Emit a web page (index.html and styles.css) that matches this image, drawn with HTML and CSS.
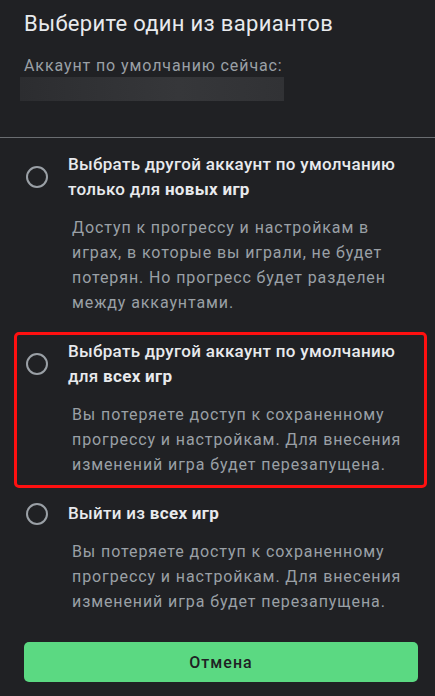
FILE: index.html
```html
<!DOCTYPE html>
<html lang="ru">
<head>
<meta charset="utf-8">
<link rel="stylesheet" href="styles.css">
</head>
<body>
<div class="sheet">
  <header class="head">
    <h1 class="title">Выберите один из вариантов</h1>
    <p class="sub">Аккаунт по умолчанию сейчас:</p>
    <div class="redacted"></div>
  </header>
  <hr class="divider">
  <div class="options">
    <div class="option">
      <span class="radio"></span>
      <div class="opt-title">Выбрать другой аккаунт по умолчанию только для <b>новых игр</b></div>
      <div class="opt-desc">Доступ к прогрессу и настройкам в играх, в которые вы играли, не будет потерян. Но прогресс будет разделен между аккаунтами.</div>
    </div>
    <div class="option marked">
      <span class="radio"></span>
      <div class="opt-title">Выбрать другой аккаунт по умолчанию для <b>всех игр</b></div>
      <div class="opt-desc">Вы потеряете доступ к сохраненному прогрессу и настройкам. Для внесения изменений игра будет перезапущена.</div>
      <span class="highlight"></span>
    </div>
    <div class="option">
      <span class="radio"></span>
      <div class="opt-title">Выйти из <b>всех игр</b></div>
      <div class="opt-desc">Вы потеряете доступ к сохраненному прогрессу и настройкам. Для внесения изменений игра будет перезапущена.</div>
    </div>
  </div>
  <button class="cancel">Отмена</button>
</div>
</body>
</html>
```
FILE: styles.css
```css
html, body {
  margin: 0;
  padding: 0;
  background: #202124;
}
body {
  font-family: Roboto, "Noto Sans", sans-serif;
  color: #e8eaed;
  width: 435px;
  height: 696px;
  overflow: hidden;
}
.head {
  padding: 10px 24px 0 24px;
}
.title {
  margin: 0;
  font-size: 22px;
  line-height: 28px;
  font-weight: 400;
  letter-spacing: 0.3px;
  color: #e8eaed;
}
.sub {
  margin: 17px 0 0 0;
  font-size: 16px;
  line-height: 22px;
  letter-spacing: 0.9px;
  color: #9aa0a6;
}
.redacted {
  margin-left: -4px;
  width: 264px;
  height: 24px;
  background: linear-gradient(90deg, #2c2d30 0%, #36373a 60%, #313235 100%);
}
.divider {
  margin: 36px 0 0 0;
  border: 0;
  height: 1px;
  background: #6a6d71;
}
.options {
  padding-top: 14px;
  display: flex;
  flex-direction: column;
  gap: 24px;
}
.option {
  position: relative;
  display: grid;
  grid-template-columns: 22px 1fr;
  column-gap: 20px;
  align-items: center;
  padding: 0 20px 0 26px;
}
.radio {
  width: 18px;
  height: 18px;
  border: 2px solid #9aa0a6;
  border-radius: 50%;
  grid-row: 1;
  grid-column: 1;
}
.opt-title {
  grid-row: 1;
  grid-column: 2;
  font-size: 17px;
  line-height: 25px;
  font-weight: 500;
  letter-spacing: 0.3px;
  color: #e8eaed;
}
.opt-title b {
  font-weight: 700;
}
.opt-desc {
  grid-row: 2;
  grid-column: 2;
  margin: 13px 0 0 4px;
  font-size: 16px;
  line-height: 25px;
  letter-spacing: 0.9px;
  color: #9aa0a6;
}
.highlight {
  position: absolute;
  left: 14px;
  right: 8px;
  top: -7px;
  bottom: -11px;
  border: 3px solid #ff1010;
  border-radius: 5px;
  pointer-events: none;
}
.cancel {
  display: block;
  margin: 28px 0 0 24px;
  width: 394px;
  height: 40px;
  border: 0;
  border-radius: 5px;
  background: #5bd982;
  color: #202124;
  font-family: Roboto, "Noto Sans", sans-serif;
  font-size: 16px;
  font-weight: 500;
  letter-spacing: 1px;
}
```
